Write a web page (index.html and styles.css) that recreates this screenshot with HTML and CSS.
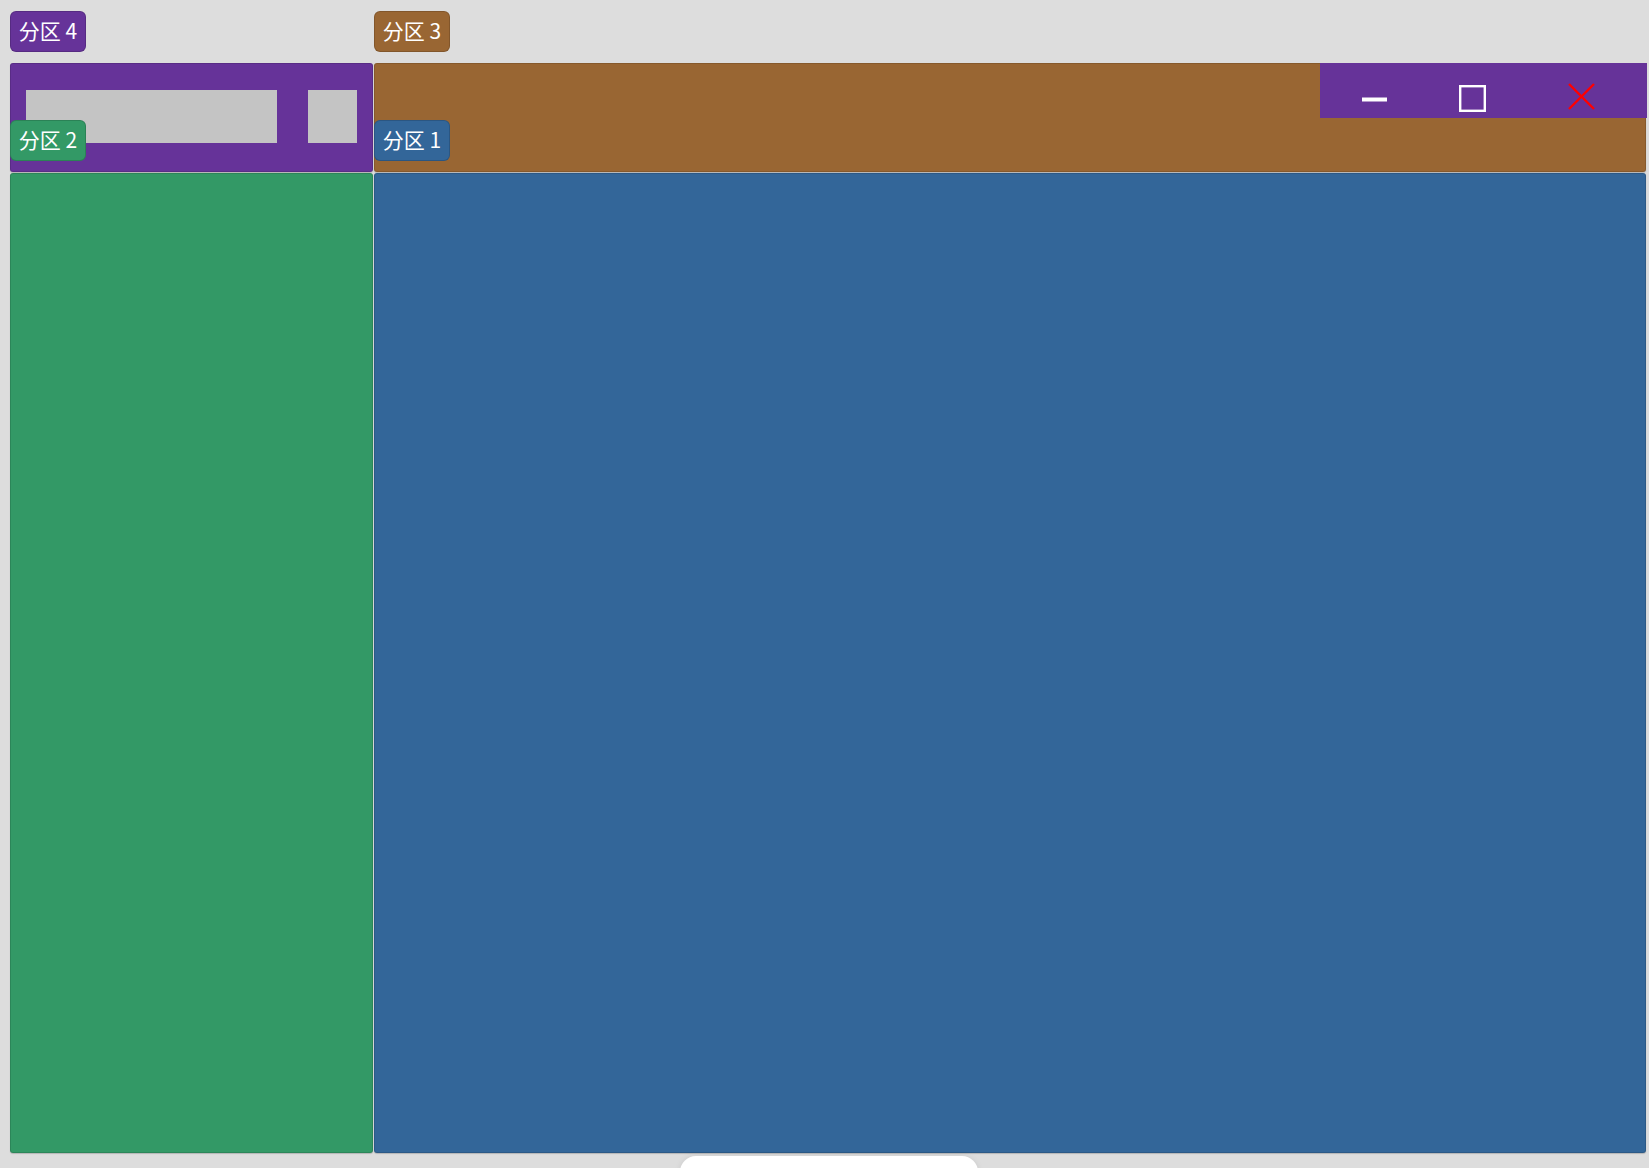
FILE: index.html
```html
<!DOCTYPE html>
<html lang="zh">
<head>
<meta charset="utf-8">
<title>分区</title>
<link rel="stylesheet" href="styles.css">
</head>
<body>
<div class="layout">
  <section class="zone zone-4">
    <span class="tag tag-4">分区 4</span>
    <div class="field field-wide"></div>
    <div class="field field-small"></div>
  </section>
  <section class="zone zone-3">
    <span class="tag tag-3">分区 3</span>
    <div class="controls">
      <span class="ctl ctl-min"><svg width="25" height="5" viewBox="0 0 25 5"><rect x="0" y="0.5" width="25" height="4" fill="#fff"/></svg></span>
      <span class="ctl ctl-max"><svg width="27" height="27" viewBox="0 0 27 27"><rect x="1.2" y="1.2" width="24.6" height="24.6" fill="none" stroke="#fff" stroke-width="2.4"/></svg></span>
      <span class="ctl ctl-close"><svg width="27" height="27" viewBox="0 0 27 27"><path d="M1 1 L26 26 M26 1 L1 26" stroke="#ff0000" stroke-width="2.4" fill="none"/></svg></span>
    </div>
  </section>
  <section class="zone zone-2">
    <span class="tag tag-2">分区 2</span>
  </section>
  <section class="zone zone-1">
    <span class="tag tag-1">分区 1</span>
  </section>
</div>
<div class="pill"></div>
</body>
</html>
```

FILE: styles.css
```css
html, body {
  margin: 0;
  padding: 0;
  background: #dddddd;
  font-family: "Noto Sans CJK SC", "Noto Sans", sans-serif;
  overflow: hidden;
}

.layout {
  display: grid;
  grid-template-columns: 363px 1fr;
  grid-template-rows: 109px 980px;
  gap: 1px;
  padding: 63px 3px 0 10px;
  height: 1168px;
  box-sizing: border-box;
}

.zone {
  position: relative;
  border: 1px solid rgba(0, 0, 0, 0.12);
  border-radius: 3px;
  box-sizing: border-box;
  box-shadow: 0 1px 1px rgba(0, 0, 0, 0.18);
}

.zone-4 {
  background: #663399;
  display: flex;
  align-items: flex-start;
  padding: 26px 15px 0 15px;
  gap: 31px;
}
.zone-3 { background: #996633; }
.zone-2 { background: #339966; }
.zone-1 { background: #336699; }

.field {
  background: #c4c4c4;
  height: 53px;
}
.field-wide { width: 251px; }
.field-small { width: 49px; }

.tag {
  position: absolute;
  top: -53px;
  left: -1px;
  width: 76px;
  height: 41px;
  box-sizing: border-box;
  border: 1px solid rgba(0, 0, 0, 0.15);
  border-radius: 6px;
  color: #ffffff;
  font-size: 21px;
  line-height: 37px;
  text-align: center;
  z-index: 2;
}
.tag-4 { background: #663399; }
.tag-3 { background: #996633; }
.tag-2 { background: #339966; top: -54px; }
.tag-1 { background: #336699; top: -54px; }

.controls {
  position: absolute;
  top: -1px;
  right: -2px;
  width: 327px;
  height: 55px;
  background: #663399;
  display: flex;
  align-items: flex-start;
}
.ctl {
  display: block;
}
.ctl svg { display: block; }
.ctl-min { margin-left: 42px; margin-top: 34px; }
.ctl-max { margin-left: 72px; margin-top: 22px; }
.ctl-close { margin-left: 82px; margin-top: 20px; }

.pill {
  position: absolute;
  left: 680px;
  top: 1156px;
  width: 298px;
  height: 40px;
  background: #ffffff;
  border-radius: 16px;
  box-shadow: 0 0 6px rgba(0, 0, 0, 0.08);
}
```
